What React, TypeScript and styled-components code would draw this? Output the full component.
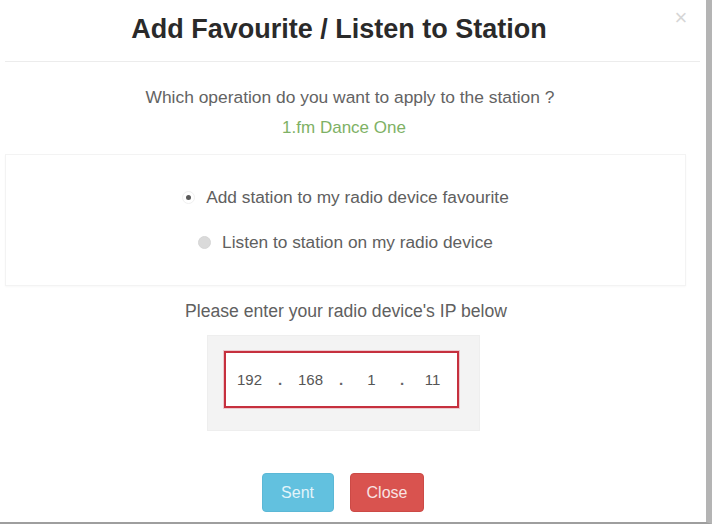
import React, { useState } from 'react';
import styled, { createGlobalStyle } from 'styled-components';

const GlobalStyle = createGlobalStyle`
  html, body {
    margin: 0;
    padding: 0;
    background: #ffffff;
  }
  body {
    font-family: "Liberation Sans", Arial, sans-serif;
  }
`;

const octets = ['192', '168', '1', '11'];

const App: React.FC = () => {
  const [mode, setMode] = useState<'favourite' | 'listen'>('favourite');

  return (
    <>
      <GlobalStyle />
      <Frame>
        <Header>
          <Title>Add Favourite / Listen to Station</Title>
          <CloseX aria-label="close">×</CloseX>
        </Header>
        <Body>
          <Question>Which operation do you want to apply to the station ?</Question>
          <StationName>1.fm Dance One</StationName>
          <OptionsPanel>
            <OptionRow onClick={() => setMode('favourite')}>
              <RadioMark $checked={mode === 'favourite'} />
              Add station to my radio device favourite
            </OptionRow>
            <OptionRow onClick={() => setMode('listen')}>
              <RadioMark $checked={mode === 'listen'} />
              Listen to station on my radio device
            </OptionRow>
          </OptionsPanel>
          <Prompt>Please enter your radio device's IP below</Prompt>
          <IpWell>
            <IpBox>
              {octets.map((o, i) => (
                <React.Fragment key={i}>
                  {i > 0 && <IpDot>.</IpDot>}
                  <IpOctet>{o}</IpOctet>
                </React.Fragment>
              ))}
            </IpBox>
          </IpWell>
          <Actions>
            <ActionButton $variant="info">Sent</ActionButton>
            <ActionButton $variant="danger">Close</ActionButton>
          </Actions>
        </Body>
      </Frame>
    </>
  );
};

export default App;

const Frame = styled.div`
  width: 706px;
  height: 522px;
  border-right: 6px solid #b4b4b4;
  border-bottom: 2px solid #9e9e9e;
  background: #fff;
  display: flex;
  flex-direction: column;
`;

const Header = styled.div`
  height: 62px;
  margin: 0 6px 0 5px;
  border-bottom: 1px solid #ececec;
  display: flex;
  align-items: center;
  padding-bottom: 3px;
  box-sizing: border-box;
`;

const Title = styled.h1`
  flex: 1;
  margin: 0;
  padding-left: 4px;
  text-align: center;
  font-size: 27px;
  font-weight: bold;
  color: #2a2a2a;
`;

const CloseX = styled.span`
  width: 24px;
  margin-right: 7px;
  align-self: flex-start;
  margin-top: 8px;
  font-size: 22px;
  line-height: 20px;
  color: #d6d6d6;
  text-align: center;
`;

const Body = styled.div`
  padding-right: 20px;
  display: flex;
  flex-direction: column;
  align-items: center;
  flex: 1;
`;

const Question = styled.div`
  margin-top: 25px;
  padding-left: 14px;
  font-size: 17.4px;
  line-height: 20px;
  color: #636363;
`;

const StationName = styled.div`
  margin-top: 11px;
  padding-left: 2px;
  font-size: 17px;
  line-height: 20px;
  color: #7eb165;
`;

const OptionsPanel = styled.div`
  align-self: stretch;
  margin: 16px 0 0 5px;
  height: 132px;
  box-sizing: border-box;
  border: 1px solid #f3f3f3;
  box-shadow: 0 1px 2px rgba(0, 0, 0, 0.03);
  padding-top: 32px;
  display: flex;
  flex-direction: column;
  align-items: center;
  gap: 25px;
`;

const OptionRow = styled.label`
  display: flex;
  align-items: center;
  gap: 11px;
  font-size: 17.3px;
  line-height: 20px;
  color: #606060;
  cursor: pointer;
`;

const RadioMark = styled.span<{ $checked: boolean }>`
  width: 13px;
  height: 13px;
  border-radius: 50%;
  box-sizing: border-box;
  display: inline-flex;
  align-items: center;
  justify-content: center;
  background: ${(p) => (p.$checked ? '#fff' : '#dadada')};
  border: 1px solid ${(p) => (p.$checked ? '#f0f0f0' : '#d6d6d6')};

  &::after {
    content: '';
    width: 5px;
    height: 5px;
    border-radius: 50%;
    background: #5a5a5a;
    display: ${(p) => (p.$checked ? 'block' : 'none')};
  }
`;

const Prompt = styled.div`
  margin-top: 15px;
  padding-left: 6px;
  font-size: 17.6px;
  line-height: 20px;
  color: #606060;
`;

const IpWell = styled.div`
  margin-top: 14px;
  padding: 15px 20px 22px 16px;
  background: #f3f3f3;
  border: 1px solid #eeeeee;
`;

const IpBox = styled.div`
  width: 235px;
  height: 57px;
  box-sizing: border-box;
  border: 2px solid #c6303e;
  box-shadow: 0 0 0 1px rgba(214, 72, 90, 0.25);
  background: #fff;
  padding: 0 2px;
  display: flex;
  align-items: center;
`;

const IpOctet = styled.span`
  width: 44px;
  text-align: center;
  font-size: 15px;
  color: #555;
`;

const IpDot = styled.span`
  width: 17px;
  text-align: center;
  font-size: 15px;
  font-weight: bold;
  color: #666;
`;

const Actions = styled.div`
  margin-top: 42px;
  display: flex;
  gap: 16px;
`;

const ActionButton = styled.button<{ $variant: 'info' | 'danger' }>`
  height: 39px;
  min-width: ${(p) => (p.$variant === 'info' ? '72px' : '74px')};
  padding: 0 16px;
  border: 1px solid ${(p) => (p.$variant === 'info' ? '#5bb8d6' : '#cc4a46')};
  border-radius: 4px;
  background: ${(p) => (p.$variant === 'info' ? '#62c1df' : '#d9534f')};
  color: ${(p) => (p.$variant === 'info' ? '#e3f4fa' : '#f8e3e3')};
  font-family: "Liberation Sans", Arial, sans-serif;
  font-size: 16px;
  cursor: pointer;
`;
